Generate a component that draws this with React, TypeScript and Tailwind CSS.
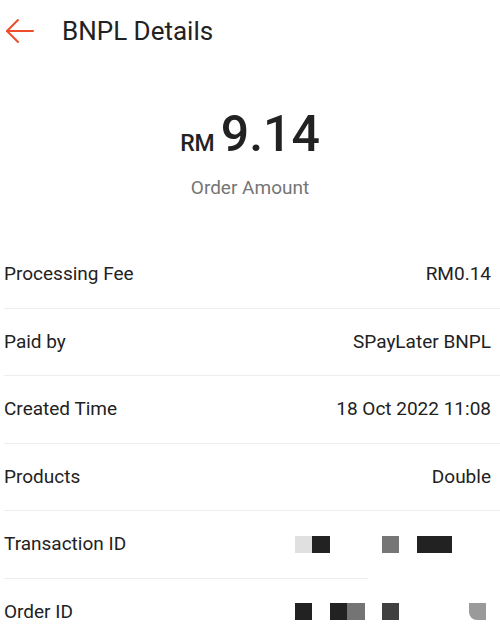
import React from 'react';

type Row = { label: string; value?: string; blocks?: React.ReactNode; shortLine?: boolean };

const Block: React.FC<{ className: string }> = ({ className }) => (
  <div className={`h-[17px] ${className}`} />
);

const rows: Row[] = [
  { label: 'Processing Fee', value: 'RM0.14' },
  { label: 'Paid by', value: 'SPayLater BNPL' },
  { label: 'Created Time', value: '18 Oct 2022 11:08' },
  { label: 'Products', value: 'Double' },
  {
    label: 'Transaction ID',
    shortLine: true,
    blocks: (
      <div className="flex items-center mr-[39px]">
        <Block className="w-[17px] bg-[#e0e0e0]" />
        <Block className="w-[18px] bg-[#222222]" />
        <div className="w-[52px]" />
        <Block className="w-[17px] bg-[#767676]" />
        <div className="w-[18px]" />
        <Block className="w-[35px] bg-[#222222]" />
      </div>
    ),
  },
  {
    label: 'Order ID',
    blocks: (
      <div className="flex items-center mr-[5px]">
        <Block className="w-[17px] bg-[#222222]" />
        <div className="w-[18px]" />
        <Block className="w-[17px] bg-[#222222]" />
        <Block className="w-[18px] bg-[#747474]" />
        <div className="w-[17px]" />
        <Block className="w-[17px] bg-[#404040]" />
        <div className="w-[70px]" />
        <Block className="w-[17px] bg-[#9a9a9a] rounded-bl-[8px]" />
      </div>
    ),
  },
];

export default function App() {
  return (
    <div
      className="w-[500px] h-[644px] overflow-hidden bg-white text-[#222222]"
      style={{ fontFamily: 'Roboto, "Noto Sans", sans-serif' }}
    >
      {/* Header */}
      <div className="h-[62px] flex items-center">
        <svg
          className="ml-[5px]"
          width="29"
          height="26"
          viewBox="0 0 29 26"
          fill="none"
          stroke="#ee4d2d"
          strokeWidth="2"
          strokeLinecap="round"
          strokeLinejoin="round"
        >
          <path d="M28 13H2" />
          <path d="M13 2L2 13l11 11" />
        </svg>
        <span className="ml-[28px] text-[26px] leading-none">BNPL Details</span>
      </div>

      {/* Amount */}
      <div className="flex flex-col items-center pt-[47px]">
        <div className="flex items-baseline">
          <span className="text-[23px] font-medium mr-[6px]">RM</span>
          <span className="text-[50px] font-medium leading-none">9.14</span>
        </div>
        <div className="mt-[12px] text-[19px] text-[#757575]">Order Amount</div>
      </div>

      {/* Rows */}
      <div className="mt-[39px] ml-[4px]">
        {rows.map((r, i) => (
          <div key={r.label}>
            <div className="h-[66.5px] flex items-center text-[19px] pr-[9px]">
              <span>{r.label}</span>
              <div className="ml-auto">{r.value ?? r.blocks}</div>
            </div>
            {i < rows.length - 1 && (
              <div className={`h-px bg-[#eeeeee] ${r.shortLine ? 'w-[364px]' : 'w-full'}`} />
            )}
          </div>
        ))}
      </div>
    </div>
  );
}
